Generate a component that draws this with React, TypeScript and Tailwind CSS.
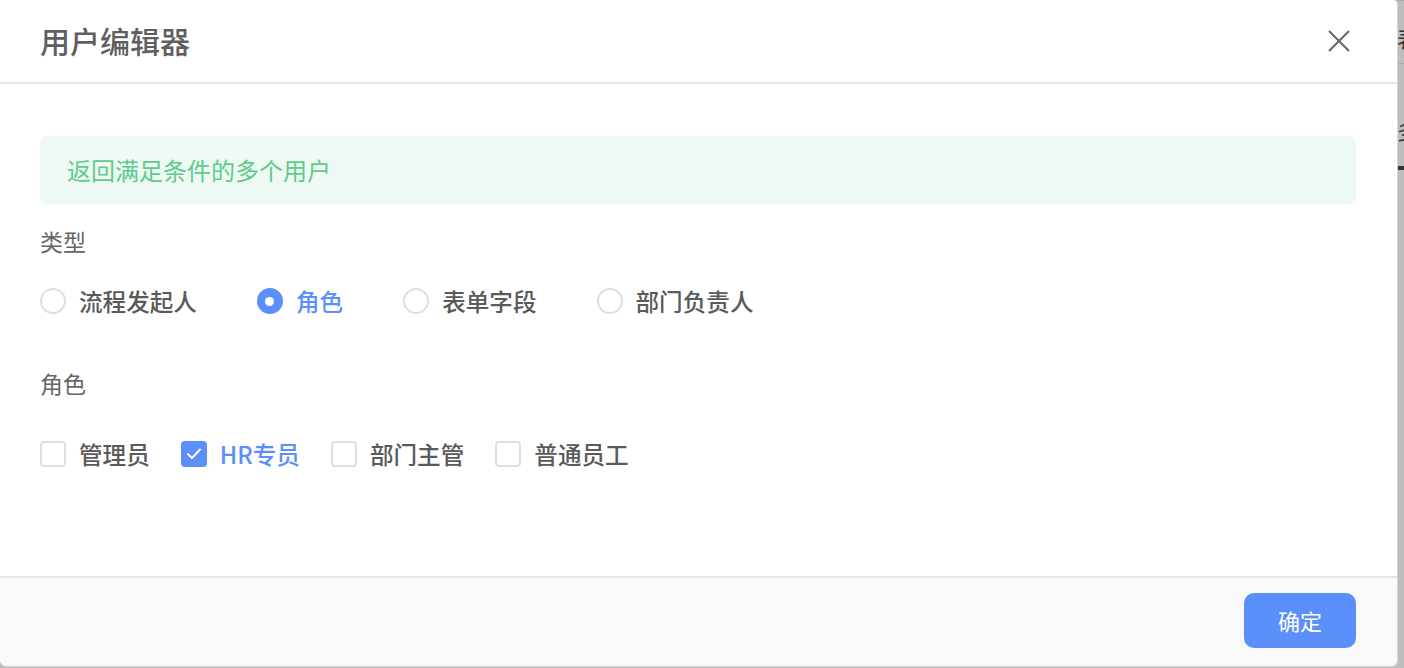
import React from "react";

const font = { fontFamily: '"Noto Sans CJK SC", "Noto Sans", sans-serif' };

function Radio({ label, checked }: { label: string; checked?: boolean }) {
  return (
    <div className="flex items-center gap-[13px]">
      {checked ? (
        <span className="w-[26px] h-[26px] rounded-full bg-[#5b8ff9] flex items-center justify-center">
          <span className="w-[9px] h-[9px] rounded-full bg-white" />
        </span>
      ) : (
        <span className="w-[26px] h-[26px] rounded-full border-2 border-[#dcdfe6] bg-white" />
      )}
      <span className={`text-[23.6px] leading-[36px] font-medium ${checked ? "text-[#5b8ff9]" : "text-[#5a5a5a]"}`}>{label}</span>
    </div>
  );
}

function Check({ label, checked }: { label: string; checked?: boolean }) {
  return (
    <div className="flex items-center gap-[13px]">
      {checked ? (
        <span className="w-[26px] h-[26px] rounded-[4px] bg-[#5b8ff9] flex items-center justify-center">
          <svg width="20" height="20" viewBox="0 0 20 20" fill="none">
            <path d="M4 10.2 L8 14 L16 5.5" stroke="white" strokeWidth="2" strokeLinecap="round" strokeLinejoin="round" />
          </svg>
        </span>
      ) : (
        <span className="w-[26px] h-[26px] rounded-[4px] border-2 border-[#dcdfe6] bg-white" />
      )}
      <span className={`text-[23.6px] leading-[36px] font-medium ${checked ? "text-[#5b8ff9]" : "text-[#5a5a5a]"}`}>{label}</span>
    </div>
  );
}

export default function App() {
  return (
    <div className="w-[1404px] h-[668px] bg-[#bdbdbd] flex overflow-hidden" style={font}>
      <div className="w-[1397px] h-[666px] bg-white rounded-b-[6px] rounded-tr-[4px] flex flex-col overflow-hidden shadow-[1px_1px_0_#d6d6d6]">
        <div className="h-[84px] shrink-0 flex items-center justify-between pl-[40px] pr-[47px] border-b-2 border-[#e4e4e4]">
          <span className="text-[30px] text-[#5f5f5f] font-medium leading-none -mt-[2px]">用户编辑器</span>
          <svg width="22" height="22" viewBox="0 0 22 22" fill="none">
            <path d="M1 1 L21 21 M21 1 L1 21" stroke="#666666" strokeWidth="2" />
          </svg>
        </div>
        <div className="flex-1 px-[40px] pt-[52px]">
          <div className="h-[68px] rounded-[8px] bg-[#edf9f2] flex items-center px-[27px] mr-[1px]">
            <span className="text-[24px] text-[#5dcc8a] leading-none">返回满足条件的多个用户</span>
          </div>
          <div className="mt-[19px] text-[23px] leading-[36px] text-[#666666]">类型</div>
          <div className="mt-[24px] flex items-center gap-[60px]">
            <Radio label="流程发起人" />
            <Radio label="角色" checked />
            <Radio label="表单字段" />
            <Radio label="部门负责人" />
          </div>
          <div className="mt-[46px] text-[23px] leading-[36px] text-[#666666]">角色</div>
          <div className="mt-[35px] flex items-center gap-[31px]">
            <Check label="管理员" />
            <Check label="HR专员" checked />
            <Check label="部门主管" />
            <Check label="普通员工" />
          </div>
        </div>
        <div className="h-[90px] shrink-0 bg-[#f9f9f9] border-t-2 border-[#e4e4e4] flex items-start justify-end pt-[15px] pr-[41px]">
          <button className="w-[112px] h-[55px] rounded-[10px] bg-[#5b8ff9] text-white text-[22px]">确定</button>
        </div>
      </div>
      <div className="w-[7px] h-full overflow-hidden relative">
        <div className="absolute left-[1px] top-[0px] w-[6px] h-[1px] bg-[#aaaaaa]" />
        <div className="absolute left-[0px] top-[26px] text-[22px] leading-none text-[#333333]">表</div>
        <div className="absolute left-[1px] top-[63px] w-[6px] h-[1px] bg-[#aaaaaa]" />
        <div className="absolute left-[0px] top-[118px] text-[22px] leading-none text-[#333333]">多</div>
        <div className="absolute left-[1px] top-[166px] w-[6px] h-[4px] bg-[#333333]" />
      </div>
    </div>
  );
}
